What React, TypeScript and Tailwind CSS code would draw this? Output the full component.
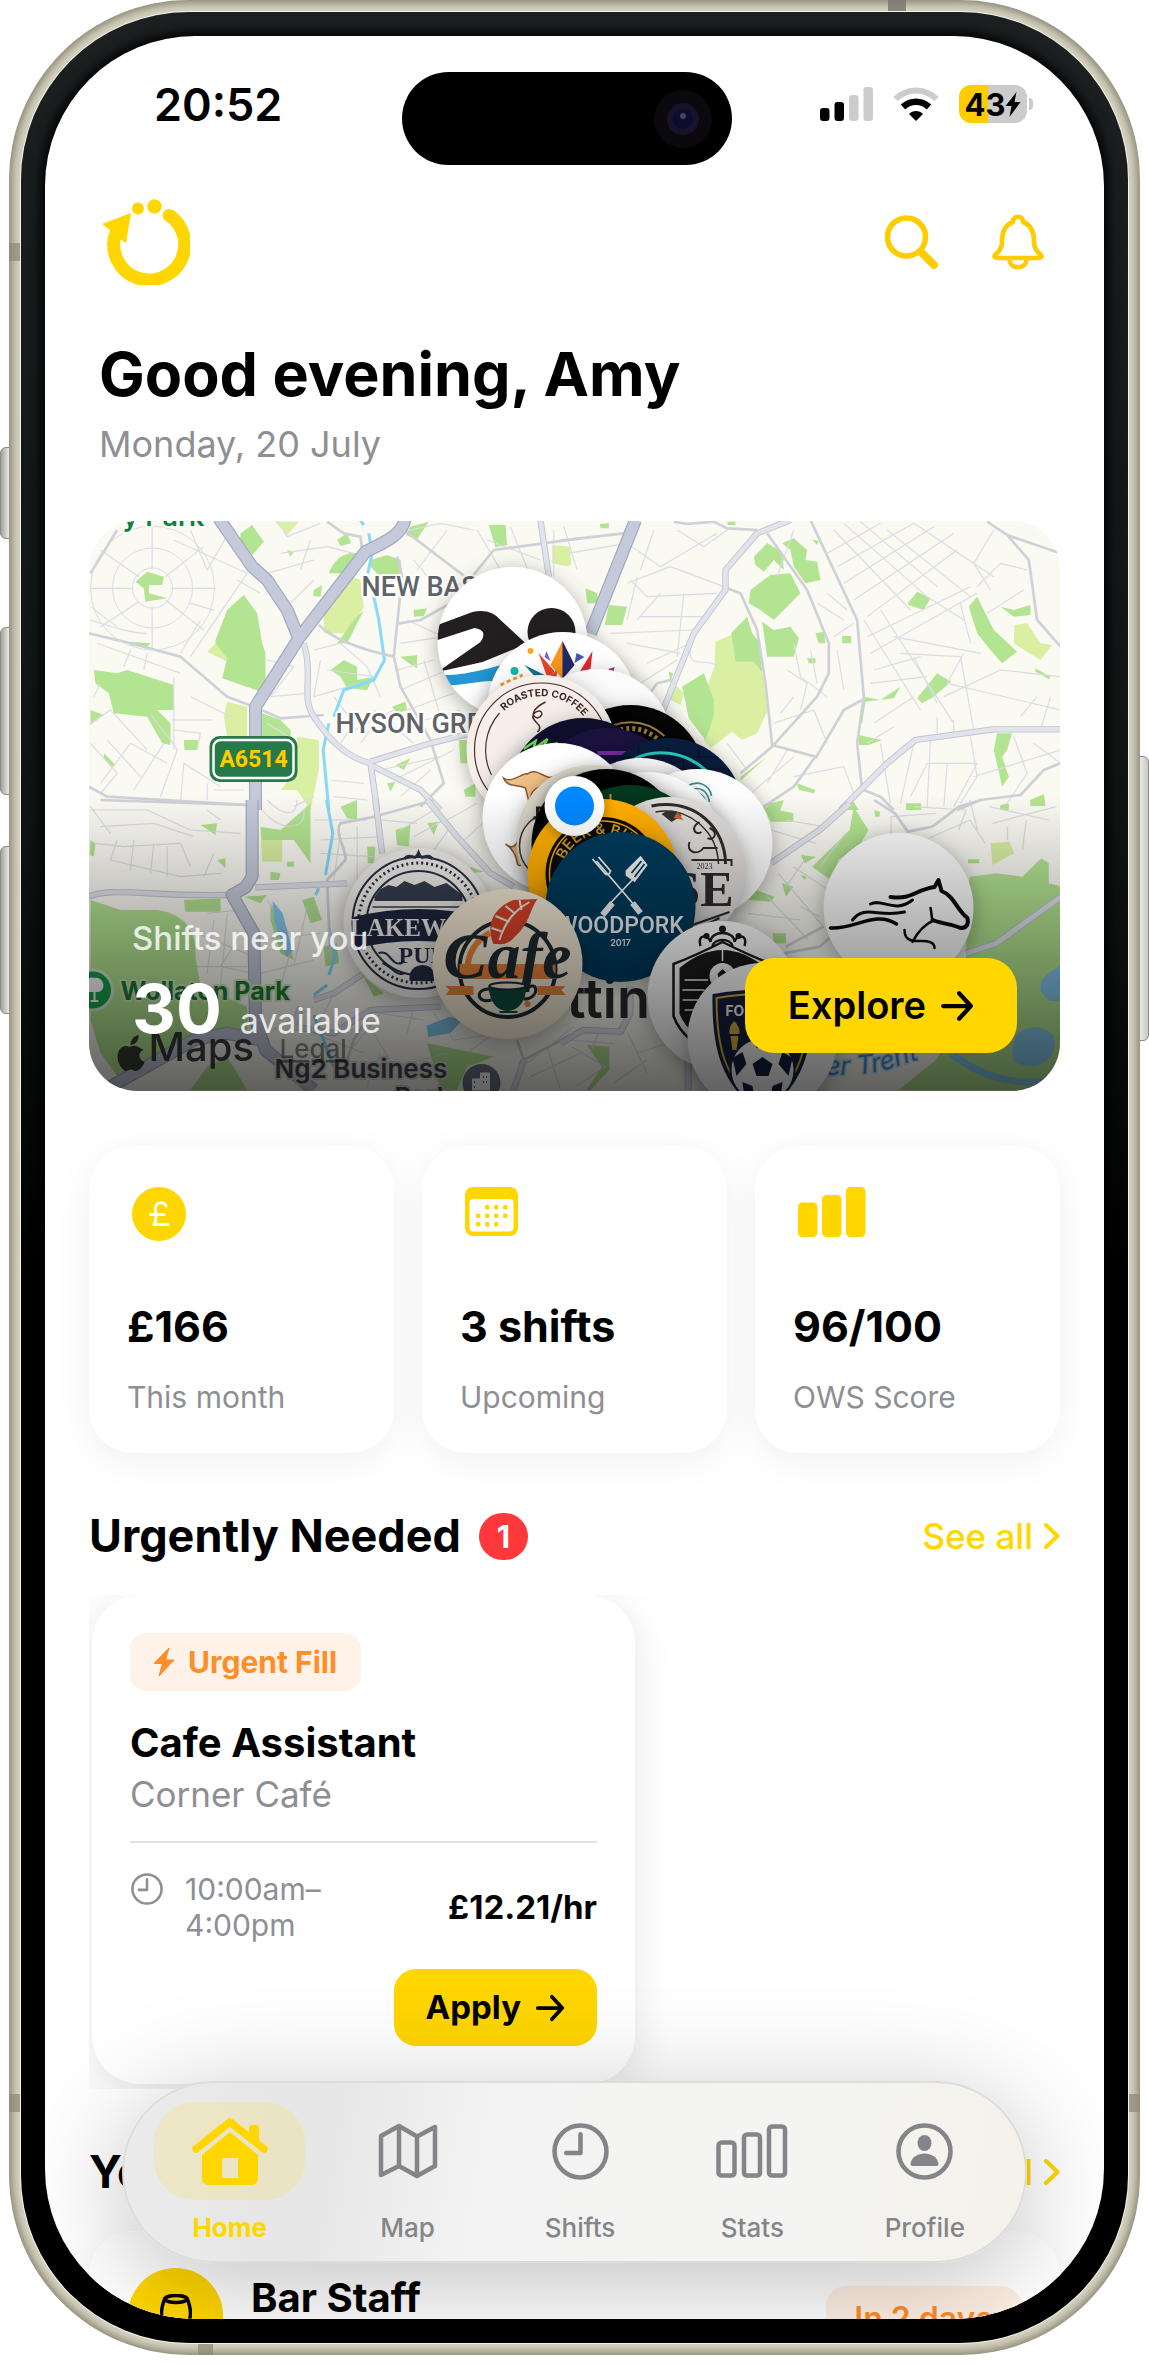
import React from "react";

const NARROW = '"Liberation Sans Narrow", Roboto, "Liberation Sans", sans-serif';
const SERIF = '"Liberation Serif", serif';

/* ---------- Icons ---------- */

function BrandLogo() {
   return (
      <svg width="88" height="86" viewBox="0 0 88 86" fill="#ffd600" aria-hidden="true">
         <path
            d="M13 36A35.5 35.5 0 1 0 67 16"
            fill="none"
            stroke="#ffd600"
            strokeWidth="13"
         />
         <circle cx="67" cy="16.500" r="6.500" />
         <path d="M0 25L29 14L24 44L18 40L7 34L8 31Z" />
         <circle cx="36" cy="9.500" r="6" />
         <circle cx="52.500" cy="7.500" r="7.200" />
      </svg>
   );
}

function SignalIcon() {
   return (
      <svg width="53" height="34" viewBox="0 0 53 34" aria-hidden="true">
         <rect x="0" y="21" width="9.500" height="13" rx="3" fill="#000" />
         <rect x="14.500" y="15" width="9.500" height="19" rx="3" fill="#000" />
         <rect x="29" y="8" width="9.500" height="26" rx="3" fill="#ccc" />
         <rect x="43.500" y="0" width="9.500" height="34" rx="3" fill="#ccc" />
      </svg>
   );
}

function WifiIcon() {
   return (
      <svg width="46" height="34" viewBox="0 0 46 34" fill="none" aria-hidden="true">
         <path d="M2.500 12C14 .5 32 .5 43.500 12" stroke="#ccc" strokeWidth="6" />
         <path d="M10 20C17.500 13 28.500 13 36 20" stroke="#000" strokeWidth="6.500" />
         <path d="M23 34L16 27C19.500 23 26.500 23 30 27Z" fill="#000" />
      </svg>
   );
}

function Battery() {
   return (
      <div className="flex items-center gap-[2px]">
         <div className="flex h-[38px] w-[68px] items-center justify-center rounded-[12px] bg-[linear-gradient(90deg,#ffcc00_43%,#cccccc_43%)] text-[31px] leading-none font-bold text-black">
            43
            <svg width="16" height="25" viewBox="0 0 15 25" aria-hidden="true">
               <path d="M11 0L0 14H6L4 25L15 10H9Z" fill="#000" />
            </svg>
         </div>
         <div className="h-3 w-1 rounded-r-full bg-[#cccccc]" />
      </div>
   );
}

function SearchIcon() {
   return (
      <svg width="54" height="54" viewBox="0 0 54 54" fill="none" stroke="#ffcc00" aria-hidden="true">
         <circle cx="21.500" cy="22" r="19" strokeWidth="5.500" />
         <path d="M36 37L49 50" strokeWidth="8" strokeLinecap="round" />
      </svg>
   );
}

function BellIcon() {
   return (
      <svg
         width="52"
         height="56"
         viewBox="0 0 52 56"
         fill="none"
         stroke="#ffcc00"
         strokeWidth="4.600"
         strokeLinecap="round"
         strokeLinejoin="round"
         aria-hidden="true"
      >
         <path d="M21 8C20.500 1 31.500 1 31 8C39 11 42 17 42 27C42 34 44 37 48 40C51 43 49 44 46 44H6C3 44 1 43 4 40C8 37 10 34 10 27C10 17 13 11 21 8Z" />
         <path d="M17.500 45C17.500 56 34.500 56 34.500 45" />
      </svg>
   );
}

function ArrowIcon({ size = 32 }: { size?: number }) {
   return (
      <svg width={size} height={size} viewBox="0 0 32 32" fill="none" stroke="#000" strokeWidth="4" strokeLinecap="round" strokeLinejoin="round" aria-hidden="true">
         <path d="M3 16H28M18 4L29 16L18 28" />
      </svg>
   );
}

function ChevronIcon() {
   return (
      <svg width="17" height="28" viewBox="0 0 17 28" fill="none" stroke="#ffd600" strokeWidth="4" strokeLinecap="round" strokeLinejoin="round" aria-hidden="true">
         <path d="M3 3L14.500 14L3 25" />
      </svg>
   );
}

function PoundIcon() {
   return (
      <svg width="54" height="54" viewBox="0 0 54 54" aria-hidden="true">
         <circle cx="27" cy="27" r="27" fill="#ffd600" />
         <path
            d="M34 19C33 15 24 14 23.500 21C23 26 26 31 22 37.500H36M18.500 27.500H32"
            fill="none"
            stroke="#fff"
            strokeWidth="3"
            strokeLinecap="round"
            strokeLinejoin="round"
         />
      </svg>
   );
}

const CALENDAR_DOTS = [
   [22, 18], [31, 18], [40, 18],
   [13, 26.5], [22, 26.5], [31, 26.5], [40, 26.5],
   [13, 35], [22, 35], [31, 35],
];

function CalendarIcon() {
   return (
      <svg width="53" height="49" viewBox="0 0 53 49" fill="#ffd600" aria-hidden="true">
         <rect width="53" height="49" rx="8" />
         <rect x="4.500" y="12" width="44" height="32.500" rx="4" fill="#fff" />
         {CALENDAR_DOTS.map(([x, y]) => (
            <rect key={`${x}-${y}`} x={x - 2} y={y} width="4.400" height="4.400" rx="1.500" />
         ))}
      </svg>
   );
}

function BarsIcon() {
   return (
      <svg width="68" height="50" viewBox="0 0 68 50" fill="#ffd600" aria-hidden="true">
         <rect x="0" y="15.500" width="19.500" height="34.500" rx="4.500" />
         <rect x="24" y="8" width="19.500" height="42" rx="4.500" />
         <rect x="48" y="0" width="19.500" height="50" rx="4.500" />
      </svg>
   );
}

function BoltIcon() {
   return (
      <svg width="20" height="28" viewBox="0 0 20 28" fill="#ff8d28" aria-hidden="true">
         <path d="M15 0L0 15.500H8.500L5 28L20 12H11.500Z" stroke="#ff8d28" strokeLinejoin="round" />
      </svg>
   );
}

function ClockIcon({ size, stroke }: { size: number; stroke: number }) {
   return (
      <svg width={size} height={size} viewBox="0 0 56 56" fill="none" stroke="currentColor" strokeWidth={stroke} strokeLinecap="round" strokeLinejoin="round" aria-hidden="true">
         <circle cx="28" cy="28" r="25.500" />
         <path d="M28 11V29.500H14" />
      </svg>
   );
}

function HomeIcon() {
   return (
      <svg width="76" height="67" viewBox="0 0 76 67" fill="#ffd600" aria-hidden="true">
         <path d="M4 31L38 4L72 31" fill="none" stroke="#ffd600" strokeWidth="7.500" strokeLinecap="round" strokeLinejoin="round" />
         <path d="M57 10Q57 7 60 7H64Q67 7 67 10V26L57 18Z" />
         <path fillRule="evenodd" d="M38 14L66 37V60Q66 67 59 67H17Q10 67 10 60V37ZM31 40Q30 40 30 41V59Q30 60 31 60H45Q46 60 46 59V41Q46 40 45 40Z" />
      </svg>
   );
}

function MapIcon() {
   return (
      <svg width="60" height="56" viewBox="0 0 60 56" fill="none" stroke="currentColor" strokeWidth="4.500" strokeLinejoin="round" aria-hidden="true">
         <path d="M3 13L21 3L39 13.500L57 4V43L39 53L21 43L3 52ZM21 3V43M39 13.500V53" />
      </svg>
   );
}

function StatsIcon() {
   return (
      <svg width="72" height="54" viewBox="0 0 72 54" fill="none" stroke="currentColor" strokeWidth="4.500" aria-hidden="true">
         <rect x="2.500" y="18.500" width="16" height="33" rx="3" />
         <rect x="28" y="10.500" width="16" height="41" rx="3" />
         <rect x="53" y="2.500" width="16" height="49" rx="3" />
      </svg>
   );
}

function ProfileIcon() {
   return (
      <svg width="57" height="57" viewBox="0 0 57 57" fill="currentColor" aria-hidden="true">
         <circle cx="28.500" cy="28.500" r="26" fill="none" stroke="currentColor" strokeWidth="4.600" />
         <ellipse cx="28.500" cy="20" rx="7" ry="8" />
         <path d="M14.500 41C16 27 41 27 42.500 41Q42.500 43 40.500 43H16.500Q14.500 43 14.500 41Z" />
      </svg>
   );
}

/* ---------- Map artwork ---------- */

// Each tile is drawn on its own 3x grid and scaled down into the map.
interface Tile {
   transform: string;
   streets: string;
   park: string;
   meadow: string;
   river: string;
   minor: string;
   secondary: string;
   major: string;
}

const TILES: Tile[] = [
   {
      transform: "translate(-8 -11) scale(.3333)",
      streets:
         "M30 235H160M270 235H405M215 50V180M215 290V420M60 120L175 200M255 270L370 360M60 350L175 275M255 200L370 110M280 90L500 190L330 440M300 430L360 330M30 330C90 350 150 370 200 370M50 400L300 490M150 420L130 470M200 430L190 480M280 500V720M275 630H395M280 660L360 670L350 720M210 610C230 650 270 680 290 720L240 860M30 640L90 600L200 720M60 820L150 700L260 760M80 690L180 800M30 700L110 790L60 850M160 840L250 700M590 30L620 80L720 40M600 130L740 110L820 130M560 190L700 150M620 290L700 210M690 90L660 180M700 420L780 400L860 470L900 560M720 450L700 560L840 520M740 480L880 500M560 450L640 470L570 560L680 550M760 560L820 640L780 700M900 80L1080 40L1180 60M1000 150L1090 260L1140 220M980 330L1130 400M960 400L1090 380M950 480L1060 450M960 540L1100 480M980 600L1120 550M1000 640L1140 600M1030 450L1080 620M880 600L1000 700M900 620L840 700M820 660L940 600M900 780L1080 740M940 810L1120 720M960 860L1050 780M1010 180L1100 60M1190 60L1260 180M1290 50L1350 200M1220 90L1380 150M1420 60V200M1450 50L1490 180M560 640L640 690M750 810L850 820M760 860L860 870M300 880L310 760L420 830M30 290L110 350M450 60L380 180L330 60M540 250L470 210M330 280L400 300M60 520L40 560M330 560L450 620M400 840H490M380 870V820M700 860L640 890",
      park: "M480 70L515 45L550 95L515 135L480 90ZM770 90L800 70L812 100L780 108ZM745 190C760 150 790 125 830 130L790 190ZM165 215L200 185L250 200L245 225L205 225V250L260 265L195 275L190 235ZM405 390L440 300L490 255L530 310L545 400L555 430V550L425 505L440 445L405 400ZM40 480L110 490L140 480L280 525V600L230 600L270 640V705L245 700L200 620L100 610L85 550L45 520ZM30 600L70 615L30 645ZM870 150L920 135L960 150L965 190L900 200L870 170ZM820 330L850 300L800 400H770ZM700 240L725 225L720 260L698 258ZM750 480L790 450L830 470V510L880 500L860 540L800 535L780 500ZM1225 45H1275L1280 105L1245 112ZM990 50L1045 35L1010 88L975 75ZM960 440L1010 435V475L985 460ZM935 590L975 575L980 600L950 610ZM545 610L600 630L630 660V700H545ZM310 690H352V720H312ZM1135 690H1160V760H1140ZM920 820L945 815L930 845ZM150 395L210 400L200 412L145 405ZM1150 840L1185 820V860H1155ZM1000 300L1040 295L1030 318L1000 320ZM70 730L105 765L95 770L70 745ZM620 120L640 125L630 140ZM945 765L990 745L970 780Z",
      meadow:
         "M790 190L840 210L850 290L800 370H730V310ZM585 35H655L620 75ZM405 400L540 480L550 510L380 425ZM440 575L500 590V680H440L430 620ZM650 680L715 690V780L690 900L650 840H600L650 780ZM1415 105L1470 110L1465 170L1415 160Z",
      river:
         "M835 25L850 45M865 70L875 130L862 190M880 260L895 330L912 450L880 510L790 540L760 620M745 640L728 720L745 900",
      minor:
         "M25 370L150 400L300 440L440 560L520 590L600 625L730 615M25 830L80 860L500 885M110 60L30 190M715 345C760 390 850 420 940 440L965 200L950 140M970 60L1180 220M955 340L1020 330L1110 280L1240 120L1500 85M940 440L960 530L1050 690L1090 820L1020 890M740 35L790 70L840 80L845 120",
      secondary:
         "M670 400C700 500 660 560 700 620C740 680 790 740 870 760L890 900M870 755L1050 700L1170 670M870 765L1020 840L1080 900M1380 30L1405 200",
      major: "M415 25L515 170L560 210L620 300L655 385M975 25C965 70 930 90 855 125L655 385L525 590V900",
   },
   {
      transform: "translate(472 -11) scale(.3333)",
      streets:
         "M20 130L200 100L300 170L470 70M200 220L330 170L490 230M210 210L260 260L470 250M230 200L200 330M240 320H430M150 370L400 360M200 400L360 430M260 460L390 400M240 520L350 450M700 60L650 200M820 60L1050 300M850 40L1100 260M900 35L1130 230M800 130L960 40M830 170L1060 40M850 220L1120 50M880 270L1180 70M980 60L1230 260M1060 40L1300 200M920 320L1190 120M920 380L1230 230M930 430L1250 250M910 330L1080 600M960 300L1180 640M1020 430L1200 440L1240 660M1000 380L1260 430M940 480L1080 440M930 520L1100 500M1060 440L1130 580M1210 430L1160 520L1500 600M1150 560L1320 480L1500 500M1290 240L1240 160L1300 60M1400 180L1320 160L1250 230M1390 240L1280 310M1200 280L1230 400M1100 260L1210 330M700 400L720 500L800 560M750 420L770 520M830 420L850 540M680 480L740 520L720 600M640 640L760 600L800 700M660 610L700 560M800 250L860 300M770 280L850 330M820 380L880 340M680 720L620 820M700 800L850 770L880 850M560 860L700 740M500 700L560 780M1050 860L1100 760H1250L1180 890M1130 620V680M1180 630V680M1000 650L920 700M1060 700L1020 880M1110 690L1100 890M1160 760L1150 890M1230 680L1250 800L1200 880M1360 680L1400 790L1340 880M1420 700L1500 760M1380 620L1430 560M1440 660L1470 560M940 640L1060 560M960 700L990 880M1240 800L1500 720M300 250L230 330M370 250L350 440M390 420C380 480 450 440 470 470M240 180L280 60M350 60L430 110L500 60",
      park: "M580 140L620 100L665 125L670 180L640 150L610 185L585 165ZM665 100L700 85L740 120L735 150L770 155L780 210L735 220L700 170L690 120ZM570 240L630 195L690 190L720 250L640 330L600 300L565 280ZM512 370L560 320L575 370L600 400L605 490L580 455H525ZM605 335L640 360L690 350L715 385L700 440H620ZM365 530L430 490L460 570V620L435 690L385 625ZM75 235L110 250L115 280H80ZM145 285L200 290L185 345H132ZM1042 280L1070 245L1110 265L1090 300L1045 285ZM1225 290L1250 260L1300 360L1370 425L1325 460L1290 420L1250 370ZM1320 290L1360 300L1410 285V315L1360 320ZM1070 565L1130 490L1172 515L1120 560L1085 580ZM910 560L960 570L1020 530L1000 565L915 575L905 640H895ZM895 675L965 690L925 705H895ZM1310 670H1355L1340 720L1325 740L1345 800L1325 830L1300 720ZM1410 870L1450 852L1455 885H1410ZM845 378H872V400H845ZM765 370L790 365L795 400L775 400ZM710 820L765 840L760 850L715 840ZM630 880L670 870L660 900H610ZM870 860L895 900H860ZM740 445H765V460H745ZM1425 475L1470 500L1465 508L1425 485ZM1320 885L1345 880V900H1318ZM500 35H525V45H502ZM118 42L145 40V55H120ZM755 90L775 92L770 105ZM540 800L620 740L540 812ZM325 485L338 490L330 520Z",
      meadow:
         "M465 395L512 375L525 455H580L610 500L622 600L590 670L545 690L515 665L450 715L430 690L460 620L440 530L462 470ZM1362 345L1400 340L1440 400L1475 405L1440 450L1360 400ZM340 520L370 550L360 585L330 570ZM0 110L28 110L32 165L0 160Z",
      river: "",
      minor:
         "M750 30L890 330L910 560L890 700L905 840M620 70L740 240L805 400V490L770 560L635 710L540 790M500 235L540 250L590 360L615 520L635 705L765 740L700 830L610 890M905 570L850 600L765 745M1280 35L1340 75L1500 130M1340 75L1405 150L1430 330L1500 410M1190 900L1260 870L1380 855L1450 780L1500 760M910 840L960 860L1000 900M340 35L380 42L460 35L500 55L590 60M0 92L190 70M240 590L290 520L330 510",
      secondary:
         "M690 30L590 70L495 180V240L400 370L300 620M1500 658H1300L1065 690L980 760L840 900",
      major: "M225 30L90 370",
   },
   {
      transform: "translate(-8 279) scale(.3333)",
      streets:
         "M30 30H200L330 90L480 100M60 80L220 70L340 110M40 130L130 140L300 130L330 200M110 120L90 180L300 230L420 220M160 120L150 210M220 130L210 220M260 140V230M370 230L400 160M30 20L90 100M380 30L420 60M545 30C600 100 680 90 670 30M560 0C620 60 650 40 650 0M700 60H860M720 120L900 110M720 160L880 170M780 100L760 240M830 80V240M900 60L1010 70M960 90L1060 30M1000 110L1090 60M1040 180L1110 80M950 160L1100 220M1100 60L1190 10M1140 130L1230 50M380 340L480 330M350 400L520 470M400 360L380 520M440 340L420 560M350 500H500M470 420L420 500L520 520M560 300L640 420L600 560M680 320L640 500M540 420L720 400M540 520L700 480M700 620L560 700M760 580L700 700L850 760M820 740L900 640L1030 660M880 700L940 800L1100 760M900 760L860 860M1000 620L980 700M1060 640L1120 720L1260 700M1160 760L1240 700M1340 790L1480 680M1350 830L1500 760M1400 740L1440 870",
      park: "M30 300L120 330H230C300 340 350 380 345 470L360 560L500 620V700L440 700L380 700L300 740L200 800L120 840L60 760L30 660ZM310 300L420 295V335H315ZM490 290L560 285L540 310ZM570 310L600 350L640 480L600 460L570 360ZM665 300L700 290L725 360L690 370ZM360 75L410 70L405 105ZM410 180L435 175V205ZM780 20L830 0V60L800 55ZM945 90L990 75L985 140L950 135ZM1040 70L1075 65L1060 105ZM540 80L600 90L690 10L690 190L640 120H545ZM860 140L885 140L880 190H862ZM30 120L45 130L40 170L28 165ZM380 800L440 770L500 870H330ZM1040 730L1240 770L1160 800L1130 870H1080ZM850 530L910 580L880 590ZM620 185H640V200H620ZM570 215L600 220L595 240H570ZM730 440L770 430L775 490L735 500ZM1170 200L1210 215L1170 220Z",
      meadow: "M540 85L605 90V185H545Z",
      river:
         "M738 0L757 100L735 225M715 265L705 285M745 385L765 465L745 525M740 555L700 585M700 645L760 800",
      minor:
         "M60 0L500 15M885 50L780 70C760 100 800 150 795 180L740 240L750 480M900 45L1060 0M870 640L820 720L800 780M1310 720L1330 780L1500 690",
      secondary:
         "M25 290C90 260 200 290 440 285M525 262L800 250M885 0L905 160M1040 0L1130 110L1230 220L1300 260M700 600L760 580L850 520M660 620L640 680L760 700L870 630L1080 620M1330 780L1300 870",
      major: "M515 0V230L495 262L455 285L520 400L525 660L555 750L700 870M90 860L340 720L440 700L540 720",
   },
   {
      transform: "translate(472 279) scale(.3756 .3333)",
      streets:
         "M880 130V50L1000 40M940 20L1080 30L1060 90M970 120L1090 60L1130 130M1090 0L1110 90M1140 20L1300 60M1150 70L1320 20M1190 80V120M1240 60L1230 150M560 90L680 130M600 60L700 80M650 180L600 260M690 200L760 100M580 220L700 380M620 200L740 290M550 290L660 420M500 340L640 360M640 320L690 350M30 740L120 800L40 860M180 700L230 820M100 700L80 760M200 760L320 720M140 850L230 780M20 720L140 730",
      park: "M540 20L620 40V65H560ZM670 200L770 90L780 20L820 90L800 130L740 180L720 240ZM520 270L570 290L560 305L500 300ZM590 250L620 260L600 290ZM640 165L680 170L650 190ZM1090 230L1160 220L1230 230L1280 175L1300 190V250L1333 260V600L1333 870H900L1000 780L1080 640V450L1080 300ZM565 400H600V430H568ZM70 735L130 740V810L80 870H70L110 800ZM1085 178H1115V190H1085ZM835 30L850 35V50H838ZM920 10H960V30H920ZM1250 0H1290V18H1252ZM640 225L655 230L650 240Z",
      meadow: "M1145 130L1195 125L1208 160L1150 195Z",
      river: "",
      minor: "M835 0L890 40L925 95L990 80L1060 20L1120 0M600 440L700 380M550 470L690 440L730 400",
      secondary: "M770 10L690 90L560 190M1333 290L1160 430L1080 460M0 730L60 690L160 695L185 640V560M340 780V870",
      major: "",
   },
];

function StreetMap() {
   return (
      <>
         <rect width="972" height="570" fill="#faf9f2" />
         {TILES.map((tile) => (
            <g key={tile.transform} transform={tile.transform} fill="none" strokeLinejoin="round">
               <path d={tile.meadow} fill="#d9efa2" />
               <path d={tile.park} fill="#b3e491" />
               <path d={tile.streets} stroke="#dadce3" strokeWidth="3.500" />
               <path d={tile.river} stroke="#85d9fb" strokeWidth="9" />
               <path d={tile.minor} stroke="#cfd1d8" strokeWidth="8" />
               <path d={tile.secondary} stroke="#bdc2d1" strokeWidth="19" />
               <path d={tile.secondary} stroke="#e2e4ec" strokeWidth="14" />
               <path d={tile.major} stroke="#9fa8bf" strokeWidth="39" />
               <path d={tile.major} stroke="#c4cad9" strokeWidth="32" />
            </g>
         ))}
         <g stroke="#dadce3" fill="none">
            <circle cx="64" cy="67" r="20" />
            <circle cx="64" cy="67" r="40" />
            <circle cx="64" cy="67" r="62" />
         </g>
         {/* Ponds and lakes by the river */}
         <g fill="#85c9ee">
            <path d="M184 380L194 392L204 430L198 436L186 400Z" />
            <path d="M338 505L360 496L375 498L362 512L340 516Z" />
            <path d="M972 445C950 455 945 470 962 480H972ZM925 540C918 505 950 498 965 515C972 535 950 555 925 540ZM868 532C900 555 930 562 972 555V562C930 570 890 560 860 535Z" />
         </g>
      </>
   );
}

function MapLabels() {
   return (
      <>
         <g stroke="#fff" strokeWidth="4" paintOrder="stroke" strokeLinejoin="round">
            <text x="116" y="5" textAnchor="end" fontSize="27" fontWeight="600" fill="#12803a">y Park</text>
            <g fill="#5f6468" fontFamily={NARROW} fontSize="27" fontWeight="500">
               <text x="273" y="75">NEW BASFORD</text>
               <text x="247" y="212">HYSON GREEN</text>
            </g>
            <text x="32" y="479" fontSize="25" fontWeight="700" fill="#1c7a35" stroke="#cfe8bd">Wollaton Park</text>
            <text x="186" y="557" fontSize="26" fontWeight="600" fill="#43464f" stroke="#d8d8d4">Ng2 Business</text>
            <text x="306" y="585" fontSize="26" fontWeight="600" fill="#43464f" stroke="#d8d8d4">Park</text>
         </g>
         <text x="404" y="497" fontSize="54" fontWeight="600" fill="#2c2c2e">Nottingham</text>
         <g>
            <rect x="121" y="215" width="88" height="46" rx="10" fill="#28794a" />
            <rect x="125" y="219" width="80" height="38" rx="7" fill="none" stroke="#fff" strokeWidth="2.500" />
            <text x="165" y="246" textAnchor="middle" fontFamily={NARROW} fontSize="23" fontWeight="700" fill="#ffcc00">A6514</text>
         </g>
         <circle cx="4" cy="469" r="20" fill="#17a34a" stroke="#d5ead0" strokeWidth="3" />
         <path d="M2 480H10M6 480V470M-4 470C-6 462 0 456 6 458C14 456 17 468 10 470Z" fill="#fff" stroke="#fff" strokeWidth="2" />
         <circle cx="393" cy="562" r="19" fill="#6a7182" />
         <path d="M383 570V557H391V551H402V570ZM386 560V562M386 565V567M395 555V557M398 555V557M395 560V562M398 560V562" fill="#fff" stroke="#6a7182" />
         <path id="river-line" d="M700 550C740 556 780 556 810 545C850 530 890 530 940 545" fill="none" />
         <text fontSize="26" fontStyle="italic" fill="#3f8fd8" stroke="#c5e3f5" strokeWidth="3" paintOrder="stroke">
            <textPath href="#river-line">River Trent</textPath>
         </text>
         {/* Attribution */}
         <g fill="#222" opacity=".85">
            <path d="M50 526C45 523 41 526 41 526C36 523 29 527 29 536C29 543 35 551 38 550C41 548 43 548 46 550C50 551 55 545 56 541C50 539 49 531 55 529ZM42 524C42 519 45 515 50 514C51 520 46 524 42 524Z" />
            <text x="60" y="540" fontSize="40" fontWeight="500">Maps</text>
            <text x="191" y="537" fontSize="26" fontWeight="500" textDecoration="underline" opacity=".6">Legal</text>
         </g>
      </>
   );
}

interface PinProps {
   x: number;
   y: number;
   fill: string;
   children?: React.ReactNode;
}

// Venue pin, children are drawn around its centre
function Pin({ x, y, fill, children }: PinProps) {
   return (
      <g transform={`translate(${x} ${y})`} className="drop-shadow-[0_4px_10px_rgba(0,0,0,0.3)]">
         <circle r="75" fill={fill} />
         {children && <g clipPath="url(#pin-clip)">{children}</g>}
      </g>
   );
}

function VenuePins() {
   return (
      <>
         <Pin x={424} y={121} fill="#fff">
            <path d="M-75 -17L-40 -30Q-22 -34 -12 -22L14 2L-30 20L-75 30L-32 0Q-24 -12 -38 -14L-75 -2Z" fill="#231f20" />
            <circle cx="39" cy="-10" r="24" fill="#231f20" />
            <path d="M-75 33C-40 34 -20 24 20 15V50C-20 28 -40 46 -75 43Z" fill="#2596d4" />
         </Pin>
         <Pin x={474} y={186} fill="#fff">
            <path d="M-38 -30L-8 -22L-4 -40L-12 -30ZM-24 -54L-8 -36L-14 -26Z" fill="#e8452c" />
            <path d="M-38 -42L-6 -26L-20 -22Z" fill="#14748f" />
            <path d="M0 -66L12 -42L0 -28L-12 -42Z" fill="#f7941d" />
            <path d="M0 -66L12 -42L0 -28Z" fill="#1d2a6b" />
            <path d="M30 -56L28 -38L14 -30Z" fill="#e4262c" />
            <path d="M44 -36L30 -26L10 -24L24 -36Z" fill="#11a068" />
            <path d="M-16 -56L-12 -46L-18 -50Z" fill="#7a5cc8" />
            <path d="M14 -54L22 -50L12 -44Z" fill="#4a52b8" />
            <circle cx="-48" cy="-36" r="4" fill="#16b5a5" />
            <circle cx="-32" cy="-56" r="3" fill="#f7a81d" />
            <path d="M46 -38L52 -40L50 -28Z" fill="#a3368f" />
            <path d="M-62 -22L-40 -32" stroke="#f39a2b" strokeWidth="3" strokeDasharray="4 3" />
         </Pin>
         <Pin x={509} y={223} fill="#fbfbfb" />
         <Pin x={542} y={259} fill="#050505">
            <path d="M-32 -46C-12 -62 14 -62 34 -44" fill="none" stroke="#a17f3d" strokeWidth="2" />
            <path d="M-26 -42C-10 -55 12 -55 28 -40" fill="none" stroke="#a17f3d" strokeWidth="5" strokeDasharray="3 3" />
         </Pin>
         <Pin x={453} y={229} fill="#f6efe9">
            <circle r="67" fill="none" stroke="#4a2f28" strokeWidth="1.200" />
            <path d="M-42 -37A56 56 0 0 0 -50 25" fill="none" stroke="#4a2f28" strokeWidth="1.200" />
            <path id="roast-arc" d="M-42 -34A54 54 0 0 1 46 -28" fill="none" />
            <text fontSize="10" fontWeight="700" fill="#3c241f">
               <textPath href="#roast-arc" startOffset="50%" textAnchor="middle">ROASTED COFFEE</textPath>
            </text>
            <path d="M4 -48C-8 -42 -12 -34 -4 -32C4 -34 0 -44 -8 -36C-12 -28 4 -26 -4 -18" fill="none" stroke="#4a2f28" strokeWidth="1.500" />
         </Pin>
         <Pin x={495} y={272} fill="#10102e">
            <path d="M-60 -44L-48 -52L-50 -44L-36 -54L-40 -46L-26 -50L-36 -42L-52 -40L-62 -30" fill="none" stroke="#6fe04f" strokeWidth="2.500" />
         </Pin>
         <Pin x={519} y={282} fill="#1b1240">
            <path d="M-10 -50H60" stroke="#a93bd0" strokeWidth="4" opacity=".7" />
         </Pin>
         <Pin x={580} y={292} fill="#0a1c3b">
            <path d="M-75 -56H75M-75 -44H75M-30 -66V-56M0 -66V-56M30 -66V-56M-15 -56V-44M15 -56V-44" stroke="#061126" strokeWidth="1" />
            <path d="M-34 -54C-16 -64 16 -64 40 -40" fill="none" stroke="#27c8b8" strokeWidth="3" />
         </Pin>
         <Pin x={552} y={312} fill="#f4f4f4" />
         <Pin x={609} y={323} fill="#fdfdfd">
            <path d="M-10 -58C0 -64 12 -60 14 -48M-8 -54C2 -58 10 -54 12 -42M-6 -50C2 -53 8 -48 9 -38M-5 -46C2 -48 5 -42 6 -34" fill="none" stroke="#3d8f9c" strokeWidth="1.600" />
         </Pin>
         <Pin x={559} y={326} fill="#f7f7f7" />
         <Pin x={469} y={297} fill="#fff">
            <path d="M-54 -40C-46 -34 -34 -46 -30 -44C-20 -52 -12 -36 -2 -42C-10 -28 -22 -34 -26 -24L-28 -14L-32 -30C-40 -34 -50 -30 -54 -40Z" fill="#f0c184" stroke="#8a5a33" strokeWidth="1.500" />
            <path d="M-52 26Q-42 34 -38 18L-34 44Q-38 50 -40 46Q-42 32 -52 26Z" fill="#f0c184" stroke="#8a5a33" strokeWidth="1.500" />
         </Pin>
         <Pin x={503} y={319} fill="#d8d4c8">
            <circle cx="-38" cy="6" r="34" fill="#e8e4d8" stroke="#333" strokeWidth="1.500" />
            <path d="M-58 -22H-46V-32H-54V-22M-54 6V14M-48 2V16" fill="none" stroke="#222" strokeWidth="3" />
         </Pin>
         <Pin x={518} y={323} fill="#030303" />
         <Pin x={542} y={339} fill="#053a1f">
            <path d="M-20 -60V-66M-26 -58H-14" stroke="#b99b3f" strokeWidth="2" />
         </Pin>
         <Pin x={581} y={351} fill="#dedbd9">
            <path d="M-18 -66C26 -74 56 -44 56 -8" fill="none" stroke="#2d2b2c" strokeWidth="3" />
            <path d="M-14 -60C20 -66 48 -40 49 -8" fill="none" stroke="#2d2b2c" strokeWidth="1.500" />
            <path d="M-8 -58C0 -64 8 -62 12 -56L2 -50Z" fill="#333" />
            <path d="M8 -60L14 -52L4 -54Z" fill="#c8622c" />
            <path d="M30 -50C20 -44 26 -36 32 -40M20 -30C16 -20 28 -16 34 -24H48M22 -12H62V-6M40 -44C50 -40 44 -30 38 -34" fill="none" stroke="#2d2b2c" strokeWidth="2" />
            <text x="35" y="-3" textAnchor="middle" fontFamily={SERIF} fontSize="8" fill="#333">2023</text>
            <text x="64" y="34" textAnchor="end" fontFamily={SERIF} fontSize="50" fontWeight="700" fill="#2d2b2c">HOUSE</text>
            <path d="M20 54L60 40M26 58L50 46" stroke="#2d2b2c" strokeWidth="2" />
         </Pin>
         <Pin x={514} y={353} fill="#ffae00">
            <circle r="57" fill="#0b0b0b" />
            <circle r="53" fill="none" stroke="#ffae00" strokeWidth="1.500" />
            <path id="burger-arc" d="M-40 0A40 40 0 0 1 40 0" fill="none" />
            <text fontSize="15" fontWeight="600" fill="#d9a320">
               <textPath href="#burger-arc" startOffset="50%" textAnchor="middle">BEER &amp; BURG</textPath>
            </text>
         </Pin>
         <Pin x={532} y={386} fill="#003b5c">
            <g stroke="#f2f2f2" strokeWidth="1.800" fill="none">
               <path d="M-24 -46L12 -4M24 -40L-10 -4" />
               <path d="M-28 -48L-16 -34Q-12 -30 -10 -36L-22 -50" />
               <path d="M6 -36L20 -50L26 -42L14 -26L6 -32Z" fill="#f2f2f2" />
               <path d="M11 -34L21 -46M14 -30L24 -43" stroke="#003b5c" />
               <path d="M12 -4L20 6M-8 -4L-18 8" strokeWidth="6" />
            </g>
            <text y="26" textAnchor="middle" fontFamily={NARROW} fontSize="23" fontWeight="500" fill="#f2f2f2">WOODPORK</text>
            <text y="39" textAnchor="middle" fontSize="9" fontWeight="600" fill="#f2f2f2">2017</text>
         </Pin>
         <Pin x={330} y={402} fill="#efece8">
            <circle r="66" fill="none" stroke="#262f44" strokeWidth="2" />
            <circle r="60" fill="none" stroke="#262f44" strokeWidth="3" strokeDasharray="2 3" />
            <circle r="52" fill="none" stroke="#262f44" strokeWidth="2" />
            <path d="M-14 -64C-8 -72 -4 -60 0 -70C4 -60 8 -72 14 -64" fill="none" stroke="#262f44" strokeWidth="3" />
            <path d="M-44 -26L-38 -34L-30 -38L-22 -36L-14 -42L-4 -38L6 -42L16 -36L28 -40L44 -28V-22H-44Z" fill="#353d4f" />
            <path d="M-46 -16H46M-40 -10H30M-30 -6H40" stroke="#353d4f" strokeWidth="1.500" />
            <path d="M-65 -6Q0 -22 65 -6V26Q0 10 -65 26Z" fill="#1d2740" />
            <text y="13" x="8" textAnchor="middle" fontFamily={SERIF} fontSize="25" fontWeight="700" fill="#efece8">LAKEWOOD</text>
            <text y="40" x="4" textAnchor="middle" fontFamily={SERIF} fontSize="24" fontWeight="700" fill="#262f44">PUB</text>
            <path d="M-9 58V52Q-6 42 4 42Q14 42 16 52V58Z" fill="#262f44" />
            <path d="M-40 30C-28 26 -28 44 -16 40M-36 40C-26 44 -22 54 -14 50M44 30C32 26 32 44 24 40" fill="none" stroke="#262f44" strokeWidth="2" />
         </Pin>
         <Pin x={419} y={443} fill="#f1e6d2">
            <circle cy="5" r="48" fill="none" stroke="#1d2b2f" strokeWidth="4" />
            <circle cy="5" r="40" fill="none" stroke="#e8823a" strokeWidth="6" strokeDasharray="50 200" strokeDashoffset="-120" />
            <rect x="-48" y="0" width="96" height="15" fill="#e8823a" />
            <path d="M-62 22H-34V31H-62L-58 26ZM58 22H30V31H58L54 26Z" fill="#e8823a" />
            <path d="M-14 -20C-22 -40 -14 -56 6 -64L30 -65C22 -54 22 -40 8 -28Q0 -18 -10 -20Z" fill="#d8412a" />
            <path d="M-8 -24C-2 -44 8 -54 22 -62M-16 -36L-4 -32M-12 -48L2 -42M-2 -58L8 -50M12 -64L14 -54" stroke="#f1e6d2" strokeWidth="2" fill="none" />
            <text x="0" y="14" textAnchor="middle" fontFamily={SERIF} fontStyle="italic" fontSize="66" fontWeight="700" fill="#1d2b2f">Cafe</text>
            <path d="M-18 22H18C17 38 10 46 0 46S-17 38 -18 22ZM-8 48H10" fill="#0c4a3e" stroke="#0c4a3e" strokeWidth="2" />
            <ellipse cy="22" rx="18" ry="3.500" fill="#f1e6d2" stroke="#1d2b2f" strokeWidth="2" />
            <path d="M18 25C32 14 32 36 16 35M-18 25C-32 24 -32 40 -16 36" fill="none" stroke="#1d2b2f" strokeWidth="3" />
            <circle cx="20" cy="40" r="3" fill="#e8823a" />
         </Pin>
         <Pin x={810} y={387} fill="#fafafa">
            <g fill="none" stroke="#0a0a0a" strokeWidth="3" strokeLinecap="round" strokeLinejoin="round">
               <path d="M-8 -11C14 -8 16 -18 36 -21L40 -28L43 -17C56 -12 58 2 69 10Q71 20 62 20C54 16 44 16 34 12" strokeWidth="4" />
               <path d="M-68 20C-44 22 -24 2 -2 16" strokeWidth="3.500" />
               <path d="M-46 12C-34 -4 -20 10 6 4" />
               <path d="M-28 -4C-16 -10 -4 6 14 -8" />
               <path d="M32 0C34 8 32 12 36 12Q22 18 14 34M6 22Q6 34 20 33Q36 32 36 40" strokeWidth="2.500" />
            </g>
         </Pin>
         <Pin x={634} y={475} fill="#fff">
            <path d="M-49 -32Q-28 -40 0 -54Q28 -40 49 -32V20Q40 46 0 62Q-40 46 -49 20Z" fill="#fff" stroke="#1a1a1a" strokeWidth="2.500" />
            <path d="M-43 -28Q0 -64 43 -28V18Q34 40 0 54Q-34 40 -43 18Z" fill="#1b1a1c" />
            <path d="M-38 -16H-14M-40 -6H-18M-40 4H-20M-38 14H-22M0 -46V-30" stroke="#fff" strokeWidth="1.500" />
            <circle cy="-20" r="14" fill="#fff" stroke="#1a1a1a" strokeWidth="2" />
            <path d="M-5 -22L0 -27L5 -22L3 -15H-3Z" fill="#1a1a1a" />
            <path d="M-22 -50C-26 -62 -14 -62 -12 -54C-12 -66 12 -66 12 -54C14 -62 26 -62 22 -50M-10 -50C-8 -58 8 -58 10 -50" fill="none" stroke="#1a1a1a" strokeWidth="2.500" />
            <circle cy="-67" r="3.500" fill="#1a1a1a" />
            <circle cx="-16" cy="-60" r="3" fill="#1a1a1a" />
            <circle cx="16" cy="-60" r="3" fill="#1a1a1a" />
         </Pin>
         <Pin x={674} y={517} fill="#fff">
            <path d="M-49 -43Q0 -52 49 -43C50 10 40 50 0 72C-40 50 -50 10 -49 -43Z" fill="#15203f" stroke="#15203f" strokeWidth="2" />
            <path d="M-46 -40Q0 -48 46 -40C46 8 38 46 0 66C-38 46 -46 8 -46 -40Z" fill="none" stroke="#d9b23c" strokeWidth="2" />
            <text y="-22" textAnchor="middle" fontSize="14" fontWeight="700" fill="#fff">FOOTBALL</text>
            <path d="M-32 -2H-24L-26 12H-30ZM-33 -4Q-34 -12 -28 -17Q-22 -10 -23 -4Z" fill="#d9b23c" />
            <circle cy="32" r="32" fill="#fff" stroke="#15203f" strokeWidth="2" />
            <path d="M-10 26L0 19L10 26L6 38H-6ZM-30 20L-20 14L-16 26L-26 38ZM30 20L20 14L16 26L26 38ZM-8 2H8L6 10H-6ZM-20 44L-10 48L-8 60H-18ZM20 44L10 48L8 60H18Z" fill="#15203f" />
         </Pin>
      </>
   );
}

function MapArtwork() {
   return (
      <svg className="absolute inset-0 h-full w-full" viewBox="0 0 972 570" preserveAspectRatio="xMidYMid slice" aria-hidden="true">
         <defs>
            <clipPath id="pin-clip">
               <circle r="75" />
            </clipPath>
         </defs>
         <StreetMap />
         <MapLabels />
         <VenuePins />
         <circle cx="486" cy="285" r="30" fill="#fff" className="drop-shadow-[0_2px_6px_rgba(0,0,0,0.35)]" />
         <circle cx="486" cy="285" r="19.500" fill="#0088ff" />
      </svg>
   );
}

/* ---------- Sections ---------- */

function StatusBar() {
   return (
      <div className="grid grid-cols-[1fr_330px_1fr] items-start pt-9 pr-4">
         <div className="flex h-16 items-center pl-[109px] text-[45px] leading-none font-semibold">20:52</div>
         <div className="flex h-[93px] items-center justify-end rounded-full bg-black pr-5">
            <div className="flex size-[58px] items-center justify-center rounded-full bg-[#0b090d]">
               <div className="flex size-8 items-center justify-center rounded-full bg-[#15122a]">
                  <div className="flex size-5 justify-center rounded-full bg-[#0e0c2e] pt-1">
                     <div className="size-[6px] rounded-full bg-[#47435f]" />
                  </div>
               </div>
            </div>
         </div>
         <div className="flex h-16 items-center justify-end gap-5 pr-[55px]">
            <SignalIcon />
            <WifiIcon />
            <Battery />
         </div>
      </div>
   );
}

interface SectionHeaderProps {
   title: string;
   count?: number;
}

function SectionHeader({ title, count }: SectionHeaderProps) {
   return (
      <div className="mt-[55px] mb-[31px] flex h-14 items-center justify-between">
         <div className="flex items-center gap-[18px]">
            <h2 className="text-[45px] leading-[56px] font-bold">{title}</h2>
            {count !== undefined && (
               <span className="flex h-[47px] w-[49px] items-center justify-center rounded-full bg-[#ff383c] text-[31px] leading-none font-bold text-white">
                  {count}
               </span>
            )}
         </div>
         <a href="#" className="flex items-center gap-[10px] text-[35px] leading-[44px] font-medium text-[#ffd600]">
            See all
            <ChevronIcon />
         </a>
      </div>
   );
}

const STATS = [
   { icon: <PoundIcon />, value: "£166", label: "This month" },
   { icon: <CalendarIcon />, value: "3 shifts", label: "Upcoming" },
   { icon: <BarsIcon />, value: "96/100", label: "OWS Score" },
];

function StatCards() {
   return (
      <div className="mt-[55px] grid grid-cols-3 gap-7">
         {STATS.map((stat) => (
            <div key={stat.label} className="rounded-[44px] bg-white px-[38px] pt-[41px] pb-[38px] shadow-[0_8px_40px_rgba(0,0,0,0.06)]">
               <div className="h-[54px] pl-[5px]">{stat.icon}</div>
               <p className="mt-[61px] text-[43px] leading-[48px] font-bold">{stat.value}</p>
               <p className="mt-[29px] text-[30px] leading-9 text-[#8e8e93]">{stat.label}</p>
            </div>
         ))}
      </div>
   );
}

function UrgentCard() {
   return (
      <div className="w-[543px] rounded-[48px] bg-white p-[38px] shadow-[0_8px_40px_rgba(0,0,0,0.10)]">
         <span className="inline-flex h-[58px] items-center gap-[14px] rounded-2xl bg-[#fff2e9] px-6 align-top text-[30px] font-bold text-[#ff8d28]">
            <BoltIcon />
            Urgent Fill
         </span>
         <h3 className="mt-7 text-[40px] leading-[48px] font-bold">Cafe Assistant</h3>
         <p className="mt-[5px] text-[35px] leading-[44px] text-[#8e8e93]">Corner Café</p>
         <div className="mt-[25px] flex items-center justify-between border-t-2 border-[#e3e3e5] pt-7">
            <div className="flex items-start gap-[22px] text-[#8e8e93]">
               <span className="mt-[2px] ml-[1px]">
                  <ClockIcon size={32} stroke={4.5} />
               </span>
               <p className="text-[30px] leading-9">
                  10:00am–
                  <br />
                  4:00pm
               </p>
            </div>
            <p className="text-[33px] leading-9 font-bold">£12.21/hr</p>
         </div>
         <div className="mt-[26px] flex justify-end">
            <button className="flex h-[77px] items-center gap-[14px] rounded-[22px] bg-[#ffd600] px-8 text-[33px] font-bold">
               Apply
               <ArrowIcon size={30} />
            </button>
         </div>
      </div>
   );
}

function UpcomingCard() {
   return (
      <div className="flex items-start rounded-[44px] bg-white px-[39px] py-[37px] shadow-[0_8px_40px_rgba(0,0,0,0.06)]">
         <div className="flex size-[95px] shrink-0 items-center justify-center rounded-full bg-[#ffd600]">
            <svg width="32" height="44" viewBox="0 0 32 44" fill="none" stroke="#000" strokeWidth="3.500" aria-hidden="true">
               <path d="M5 4C1 14 0 24 5 30Q16 38 27 30C32 24 31 14 27 4" />
               <ellipse cx="16" cy="5" rx="11" ry="3.500" />
               <path d="M16 34V42M8 42H24" />
            </svg>
         </div>
         <h3 className="mt-[6px] ml-[28px] flex-1 text-[40px] leading-[48px] font-bold">Bar Staff</h3>
         <span className="mt-[18px] flex h-[66px] items-center rounded-[20px] bg-[#fff0e4] px-[28px] text-[32px] font-semibold text-[#ff8d28]">
            In 2 days
         </span>
      </div>
   );
}

const TABS = [
   { label: "Home", icon: <HomeIcon />, active: true },
   { label: "Map", icon: <MapIcon /> },
   { label: "Shifts", icon: <ClockIcon size={57} stroke={4.5} /> },
   { label: "Stats", icon: <StatsIcon /> },
   { label: "Profile", icon: <ProfileIcon /> },
];

function TabBar() {
   return (
      <nav className="absolute inset-x-[77px] bottom-14 grid grid-cols-[183fr_172fr_172fr_172fr_172fr] rounded-full border-2 border-[#dcdcdb] bg-[linear-gradient(100deg,#ebebeb,#e6e6e6_22%,#f3f3f3_40%,#f4f4f2_75%,#f4f2e9)] px-[14px] pt-[19px] pb-[17px] shadow-[0_20px_110px_rgba(0,0,0,0.25)]">
         {TABS.map((tab) => (
            <button key={tab.label} className="flex flex-col items-center gap-3" aria-current={tab.active ? "page" : undefined}>
               <span
                  className={`flex h-[98px] w-[151px] items-center justify-center rounded-[40px] ${
                     tab.active ? "bg-[#ffd600]/15" : "text-[#858589]"
                  }`}
               >
                  {tab.icon}
               </span>
               <span className={`text-[26px] leading-8 ${tab.active ? "font-bold text-[#ffd600]" : "font-medium text-[#858589]"}`}>
                  {tab.label}
               </span>
            </button>
         ))}
      </nav>
   );
}

/* ---------- Device ---------- */

function SideButton({ className }: { className: string }) {
   return <div className={`absolute w-[18px] rounded-md border border-[#8d8a80] bg-[linear-gradient(90deg,#a5a39b,#e8e8e6_50%,#c9c8c2)] ${className}`} />;
}

function PhoneFrame({ children }: { children: React.ReactNode }) {
   return (
      <div className="relative h-screen px-[9px] pb-[9px]">
         <SideButton className="top-[447px] left-0 h-[92px]" />
         <SideButton className="top-[627px] left-0 h-[168px]" />
         <SideButton className="top-[846px] left-0 h-[168px]" />
         <SideButton className="top-[756px] right-0 h-[285px]" />
         <div className="relative h-full overflow-hidden rounded-[180px] bg-[#d5d2c0] p-3 shadow-[inset_0_0_9px_3px_#87826f]">
            {/* Antenna bands */}
            <div className="absolute top-[243px] left-0 h-[18px] w-3 bg-[#8b8775]/70" />
            <div className="absolute bottom-[243px] left-0 h-[18px] w-3 bg-[#8b8775]/70" />
            <div className="absolute right-0 bottom-[243px] h-[18px] w-3 bg-[#8b8775]/70" />
            <div className="absolute top-0 right-[234px] h-3 w-[18px] bg-[#77746b]/80" />
            <div className="absolute bottom-0 left-[189px] h-3 w-[15px] bg-[#8b8775]/70" />
            <div className="relative h-full rounded-[168px] bg-[linear-gradient(#1c2021,#101313_35%,#000_55%)] p-6 shadow-[0_0_0_1px_#f4f3ea]">
               <div className="relative h-full overflow-hidden rounded-[150px] bg-white shadow-[0_0_12px_4px_#000]">{children}</div>
            </div>
         </div>
      </div>
   );
}

function App() {
   return (
      <div className="bg-white font-[Inter,sans-serif] text-black">
         <PhoneFrame>
            <StatusBar />
            <header className="px-[54px]">
               <div className="mt-[34px] flex h-[86px] items-center justify-between">
                  <span className="pl-[3px]">
                     <BrandLogo />
                  </span>
                  <div className="flex items-center gap-[53px] pr-[6px]">
                     <button aria-label="Search">
                        <SearchIcon />
                     </button>
                     <button aria-label="Notifications">
                        <BellIcon />
                     </button>
                  </div>
               </div>
               <h1 className="mt-[53px] text-[61px] leading-[72px] font-bold">Good evening, Amy</h1>
               <p className="mt-[10px] text-[36px] leading-[48px] text-[#8e8e93]">Monday, 20 July</p>
            </header>
            <main className="px-11">
               <section className="relative mt-[53px] flex aspect-[971/570] items-end justify-between overflow-hidden rounded-[48px] pb-8">
                  <MapArtwork />
                  <div className="absolute inset-0 bg-[linear-gradient(rgba(0,0,0,0)_48%,rgba(0,0,0,0.62))]" />
                  <div className="relative pl-[43px] text-white">
                     <p className="text-[33px] leading-10 font-medium text-white/80">Shifts near you</p>
                     <p className="mt-3 flex items-baseline gap-[18px] text-[34px] leading-[76px] text-white/80">
                        <span className="text-[68px] font-bold text-white">30</span>
                        available
                     </p>
                  </div>
                  <button className="relative mr-[43px] mb-[6px] flex h-[95px] items-center gap-[14px] rounded-[30px] bg-[#ffd600] px-[43px] text-[38px] font-semibold">
                     Explore
                     <ArrowIcon size={34} />
                  </button>
               </section>
               <StatCards />
               <SectionHeader title="Urgently Needed" count={1} />
               <div className="flex overflow-hidden pb-[5px] pl-[3px]">
                  <UrgentCard />
               </div>
               <SectionHeader title="Your Shifts" />
               <UpcomingCard />
            </main>
            <TabBar />
         </PhoneFrame>
      </div>
   );
}

export default App;
